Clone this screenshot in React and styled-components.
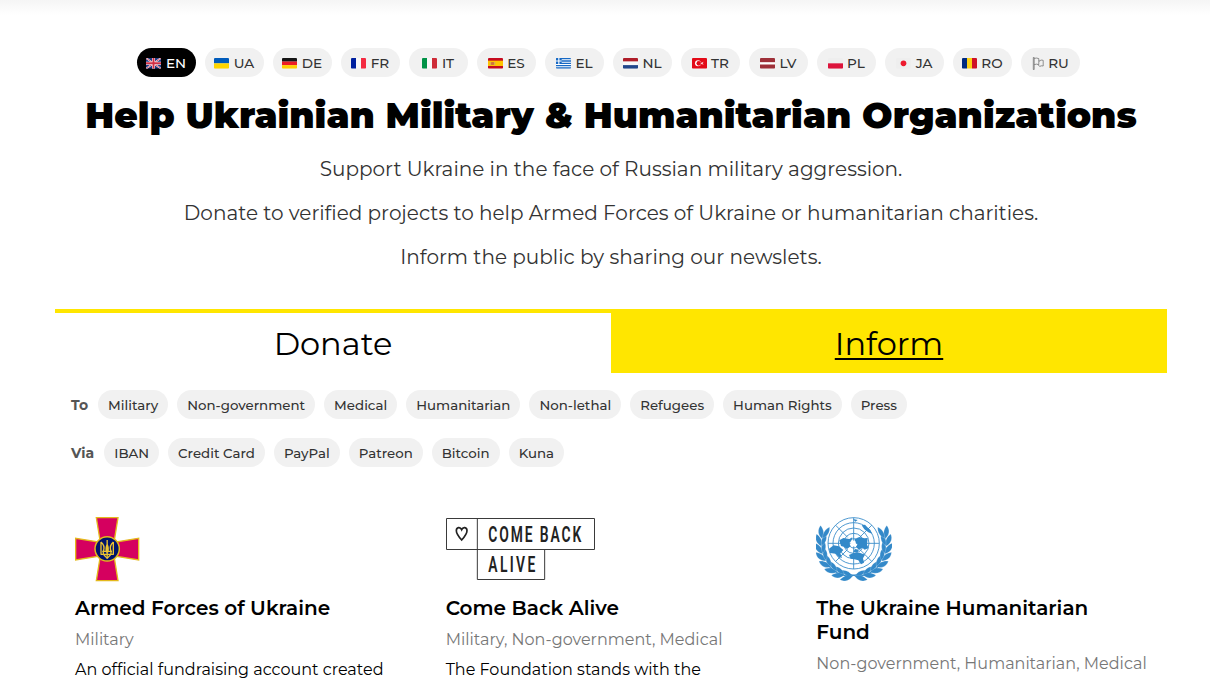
import React from 'react';
import styled, { createGlobalStyle } from 'styled-components';

const GlobalStyle = createGlobalStyle`
  * { box-sizing: border-box; }
  body {
    margin: 0;
    background: #fff;
    color: #000;
    font-family: Montserrat, Inter, sans-serif;
  }
`;

const Page = styled.div`
  height: 682px;
  overflow: hidden;
  padding: 48px 43px 0 55px;
  background: linear-gradient(#f5f5f5, #fff 15px);
`;

const LanguageBar = styled.nav`
  display: flex;
  justify-content: center;
  gap: 9px;
  margin-right: 5px;
`;

const LanguagePill = styled.button`
  display: flex;
  align-items: center;
  justify-content: center;
  gap: 4.5px;
  width: 59px;
  height: 29px;
  padding: 1px 0.5px 0 0;
  border: 0;
  border-radius: 15px;
  background: ${(p) => (p.$active ? '#000' : '#f1f1f1')};
  color: ${(p) => (p.$active ? '#fff' : '#333')};
  font: 500 13.6px/28px Montserrat, Inter, sans-serif;
  svg { display: block; flex: none; }
`;

const Title = styled.h1`
  margin: 16px 0 0;
  font-size: 36px;
  font-weight: 900;
  line-height: 44px;
  letter-spacing: 0.04px;
  text-align: center;
  white-space: nowrap;
`;

const Intro = styled.div`
  margin-top: 10px;
  text-align: center;
`;

const IntroLine = styled.p`
  margin: 0;
  color: #333;
  font-size: 20px;
  line-height: 44px;
`;

const Tabs = styled.div`
  display: grid;
  grid-template-columns: 1fr 1fr;
  height: 64px;
  margin-top: 30px;
`;

const Tab = styled.a`
  height: 64px;
  padding-top: 1px;
  border-top: 4px solid #ffe600;
  background: ${(p) => (p.$filled ? '#ffe600' : '#fff')};
  font-size: 32px;
  line-height: 60px;
  text-align: center;
  text-decoration: ${(p) => (p.$filled ? 'underline' : 'none')};
  text-decoration-thickness: 2px;
  text-underline-offset: 3px;
`;

const FilterRow = styled.div`
  display: flex;
  align-items: center;
  gap: 9px;
  height: 29px;
  margin: ${(p) => p.$top}px 0 0 16px;
`;

const FilterLabel = styled.span`
  margin-right: 1px;
  color: #555;
  font-size: 14px;
  font-weight: 700;
`;

const FilterPill = styled.button`
  height: 29px;
  padding: 1px 10px 0;
  border: 0;
  border-radius: 15px;
  background: #f1f1f1;
  color: #333;
  font: 500 13.33px/28px Montserrat, Inter, sans-serif;
  letter-spacing: 0.015px;
  white-space: nowrap;
`;

const CardGrid = styled.div`
  display: grid;
  grid-template-columns: repeat(3, minmax(0, 1fr));
  margin-top: 49px;
`;

const Card = styled.article`
  padding: 0 20px;
`;

const Logo = styled.div`
  height: 65px;
  padding-top: ${(p) => p.$drop}px;
  svg { display: block; }
`;

const CardTitle = styled.h2`
  margin: 15px 0 0;
  font-size: 20px;
  font-weight: 600;
  line-height: 24px;
`;

const CardTags = styled.p`
  margin: 8px 0 0;
  color: #777;
  font-size: 16px;
  line-height: 24px;
  letter-spacing: 0.015px;
  white-space: nowrap;
`;

const CardText = styled.p`
  margin: 6px 0 0;
  font-size: 16px;
  line-height: 24px;
  white-space: nowrap;
`;

function Bands({ colors, vertical }) {
  const n = colors.length;
  return colors.map((c, i) =>
    vertical ? (
      <rect key={i} x={(45 / n) * i} width={45 / n + 0.2} height="32" fill={c} />
    ) : (
      <rect key={i} y={(32 / n) * i} width="45" height={32 / n + 0.2} fill={c} />
    )
  );
}

const flagArt = {
  EN: (
    <>
      <rect width="45" height="32" fill="#1f3a85" />
      <path d="M0 0L45 32M45 0L0 32" stroke="#fff" strokeWidth="5" />
      <path d="M0 0L45 32M45 0L0 32" stroke="#d22f45" strokeWidth="2.4" />
      <path d="M22.5 0V32M0 16H45" stroke="#fff" strokeWidth="9" />
      <path d="M22.5 0V32M0 16H45" stroke="#d22f45" strokeWidth="6" />
    </>
  ),
  UA: <Bands colors={['#005bbb', '#ffd500']} />,
  DE: <Bands colors={['#141414', '#ed1c24', '#ffce00']} />,
  FR: <Bands vertical colors={['#00209f', '#f8f8f8', '#f42a41']} />,
  IT: <Bands vertical colors={['#009246', '#f8f8f8', '#ce2b37']} />,
  ES: (
    <>
      <rect width="45" height="32" fill="#c60b1e" />
      <rect y="8" width="45" height="16" fill="#ffc400" />
      <rect x="9" y="12" width="9" height="9" rx="2" fill="#d0713c" />
      <path d="M7 12V22M20 12V22" stroke="#b9a08a" strokeWidth="2" />
    </>
  ),
  EL: (
    <>
      <rect width="45" height="32" fill="#1769c4" />
      <path d="M0 5.5H45M0 12.5H45M0 19.5H45M0 26.5H45" stroke="#fff" strokeWidth="3.2" />
      <rect width="17" height="17.8" fill="#1769c4" />
      <path d="M8.5 0V18M0 9H17" stroke="#fff" strokeWidth="3.4" />
    </>
  ),
  NL: <Bands colors={['#ae1c28', '#f8f8f8', '#21468b']} />,
  TR: (
    <>
      <rect width="45" height="32" fill="#e30a17" />
      <circle cx="18" cy="16" r="9" fill="#fff" />
      <circle cx="20.5" cy="16" r="7" fill="#e30a17" />
      <path d="M26 16l8-3-4 3 4 3zM30 13v6" fill="#fff" stroke="#fff" />
    </>
  ),
  LV: (
    <>
      <rect width="45" height="32" fill="#9e3039" />
      <rect y="12.5" width="45" height="7" fill="#fff" />
    </>
  ),
  PL: <Bands colors={['#eeeeee', '#dc143c']} />,
  JA: (
    <>
      <rect width="45" height="32" fill="#eeeeee" />
      <circle cx="22.5" cy="16" r="8.5" fill="#ed1b2f" />
    </>
  ),
  RO: <Bands vertical colors={['#002b7f', '#fcd116', '#ce1126']} />,
};

function Flag({ code }) {
  if (code === 'RU') {
    return (
      <svg width="12" height="15" viewBox="0 0 12 15" fill="none" stroke="#666" strokeWidth=".7">
        <path d="M1.3 1.5V13.5H2.2V1.5ZM2.2 2.4Q4.5 1.6 6.8 2.6V8.6Q4.5 7.7 2.2 8.6M6.8 4.6L8 5.2L8.6 4.2Q10 3.8 11.2 4.4V10Q9.4 9.4 7.6 10.4L6 8.6" />
      </svg>
    );
  }
  return (
    <svg width="15" height="11" viewBox="0 0 45 33">
      <clipPath id={`flag-${code}`}>
        <rect width="45" height="32" rx="3" />
      </clipPath>
      <g clipPath={`url(#flag-${code})`}>{flagArt[code]}</g>
    </svg>
  );
}

function ArmedForcesLogo() {
  const arm = 'M94 38H159L147 112H106Z';
  return (
    <svg width="65" height="65" viewBox="30 36 195 195">
      <g fill="#d5005f" stroke="#e4b91c" strokeWidth="4">
        {[0, 90, 180, 270].map((a) => (
          <path key={a} d={arm} transform={`rotate(${a} 126.5 132.5)`} />
        ))}
      </g>
      <circle cx="126.5" cy="131.5" r="36.5" fill="#00146b" stroke="#e4b91c" strokeWidth="4.5" />
      <g fill="none" stroke="#ecc431" strokeWidth="4" strokeLinejoin="round">
        <path d="M108 111V148H145V111M108 111Q120 121 116 136Q112 148 121 154L126.5 160L132 154Q141 148 137 136Q133 121 145 111" />
        <path d="M126.5 105V156M126.5 118Q121 133 125 142M126.5 118Q132 133 128 142M112 139H141" />
      </g>
    </svg>
  );
}

function ComeBackAliveLogo() {
  const lettering = {
    fontFamily: 'Roboto, sans-serif',
    fontWeight: 600,
    fontSize: 65,
    fill: '#222',
  };
  return (
    <svg width="149" height="62" viewBox="18 24 447 186">
      <g fill="none" stroke="#3a3a3a" strokeWidth="3">
        <path d="M19.5 25.5H463.5V118.5H19.5ZM112 25.5V208.5H314V118.5" />
        <path
          d="M65 90C58 82 49 71 49 62C49 51 61 50 65 59C69 50 81 51 81 62C81 71 72 82 65 90Z"
          stroke="#222"
          strokeWidth="5"
        />
      </g>
      <g {...lettering}>
        <text transform="translate(145 95) scale(.64 1)" textLength="436">COME BACK</text>
        <text transform="translate(145 187) scale(.64 1)" textLength="220">ALIVE</text>
      </g>
    </svg>
  );
}

const LEAF = 'M0 4C9 -8 8 -24 -2 -38C-14 -25 -12 -8 0 4Z';

function LaurelBranch() {
  const leaves = [];
  for (let i = 0; i < 8; i += 1) {
    const angle = 94 + i * 14.3;
    const rad = (angle * Math.PI) / 180;
    const x = 146 + 98 * Math.cos(rad);
    const y = 120 + 94 * Math.sin(rad);
    leaves.push(
      <g key={i} transform={`translate(${x} ${y}) rotate(${angle - 176})`}>
        <path d={LEAF} transform="rotate(-22) scale(.95)" />
        <path d={LEAF} transform="translate(3 -2) scale(-.8 .95) rotate(-14)" />
      </g>
    );
  }
  return (
    <g fill="#3389c9" stroke="#fff" strokeWidth=".6">
      {leaves}
      <path d="M176 222Q158 202 138 214Q92 212 66 177" fill="none" stroke="#3389c9" strokeWidth="3.5" />
    </g>
  );
}

function UnitedNationsLogo() {
  return (
    <svg width="76" height="64" viewBox="33 36 228 192">
      <LaurelBranch />
      <g transform="translate(292 0) scale(-1 1)">
        <LaurelBranch />
      </g>
      <circle cx="146" cy="115" r="79" fill="#fff" />
      <g fill="none" stroke="#3389c9" strokeWidth="2.6">
        {[14, 30, 46, 62, 77].map((r) => (
          <circle key={r} cx="146" cy="115" r={r} />
        ))}
        <path d="M146 38V192M69 115H223M91.5 60.5L128 97M164 133L200.5 169.5M91.5 169.5L128 133M164 97L200.5 60.5" />
      </g>
      <g fill="#3389c9">
        <path d="M103 106L115 99L133 102L142 97L139 108L132 114L137 124L126 132L116 125L108 123Z" />
        <path d="M72 131L86 121L102 124L115 135L106 145L111 159L100 155L92 146L75 144Z" />
        <path d="M149 102L163 96L178 100L188 99L186 119L191 129L179 134L172 128L162 134L153 126L158 116L150 113Z" />
        <path d="M132 150L145 144L164 143L180 149L174 160L177 173L168 178L160 166L148 163L137 161Z" />
        <path d="M170 61L180 59L188 68L196 75L201 86L190 82L178 73Z" />
        <path d="M144 42L158 45L151 50ZM150 132L162 134L157 143L145 140Z" />
      </g>
      <path d="M140 106L151 108L154 121L143 125L136 116Z" fill="#fff" />
    </svg>
  );
}

const languages = ['EN', 'UA', 'DE', 'FR', 'IT', 'ES', 'EL', 'NL', 'TR', 'LV', 'PL', 'JA', 'RO', 'RU'];

const recipients = [
  'Military',
  'Non-government',
  'Medical',
  'Humanitarian',
  'Non-lethal',
  'Refugees',
  'Human Rights',
  'Press',
];

const methods = ['IBAN', 'Credit Card', 'PayPal', 'Patreon', 'Bitcoin', 'Kuna'];

const cards = [
  {
    logo: <ArmedForcesLogo />,
    drop: 1,
    title: 'Armed Forces of Ukraine',
    tags: 'Military',
    text: 'An official fundraising account created',
  },
  {
    logo: <ComeBackAliveLogo />,
    drop: 2,
    title: 'Come Back Alive',
    tags: 'Military, Non-government, Medical',
    text: 'The Foundation stands with the',
  },
  {
    logo: <UnitedNationsLogo />,
    drop: 1,
    title: 'The Ukraine Humanitarian Fund',
    tags: 'Non-government, Humanitarian, Medical',
  },
];

function Filters({ label, items, top }) {
  return (
    <FilterRow $top={top}>
      <FilterLabel>{label}</FilterLabel>
      {items.map((name) => (
        <FilterPill key={name}>{name}</FilterPill>
      ))}
    </FilterRow>
  );
}

export default function App() {
  return (
    <Page>
      <GlobalStyle />
      <LanguageBar>
        {languages.map((code) => (
          <LanguagePill key={code} $active={code === 'EN'}>
            <Flag code={code} />
            {code}
          </LanguagePill>
        ))}
      </LanguageBar>
      <Title>Help Ukrainian Military &amp; Humanitarian Organizations</Title>
      <Intro>
        <IntroLine>Support Ukraine in the face of Russian military aggression.</IntroLine>
        <IntroLine>
          Donate to verified projects to help Armed Forces of Ukraine or humanitarian charities.
        </IntroLine>
        <IntroLine>Inform the public by sharing our newslets.</IntroLine>
      </Intro>
      <Tabs>
        <Tab>Donate</Tab>
        <Tab $filled>Inform</Tab>
      </Tabs>
      <Filters label="To" items={recipients} top={17} />
      <Filters label="Via" items={methods} top={19} />
      <CardGrid>
        {cards.map((card) => (
          <Card key={card.title}>
            <Logo $drop={card.drop}>{card.logo}</Logo>
            <CardTitle>{card.title}</CardTitle>
            <CardTags>{card.tags}</CardTags>
            {card.text && <CardText>{card.text}</CardText>}
          </Card>
        ))}
      </CardGrid>
    </Page>
  );
}
